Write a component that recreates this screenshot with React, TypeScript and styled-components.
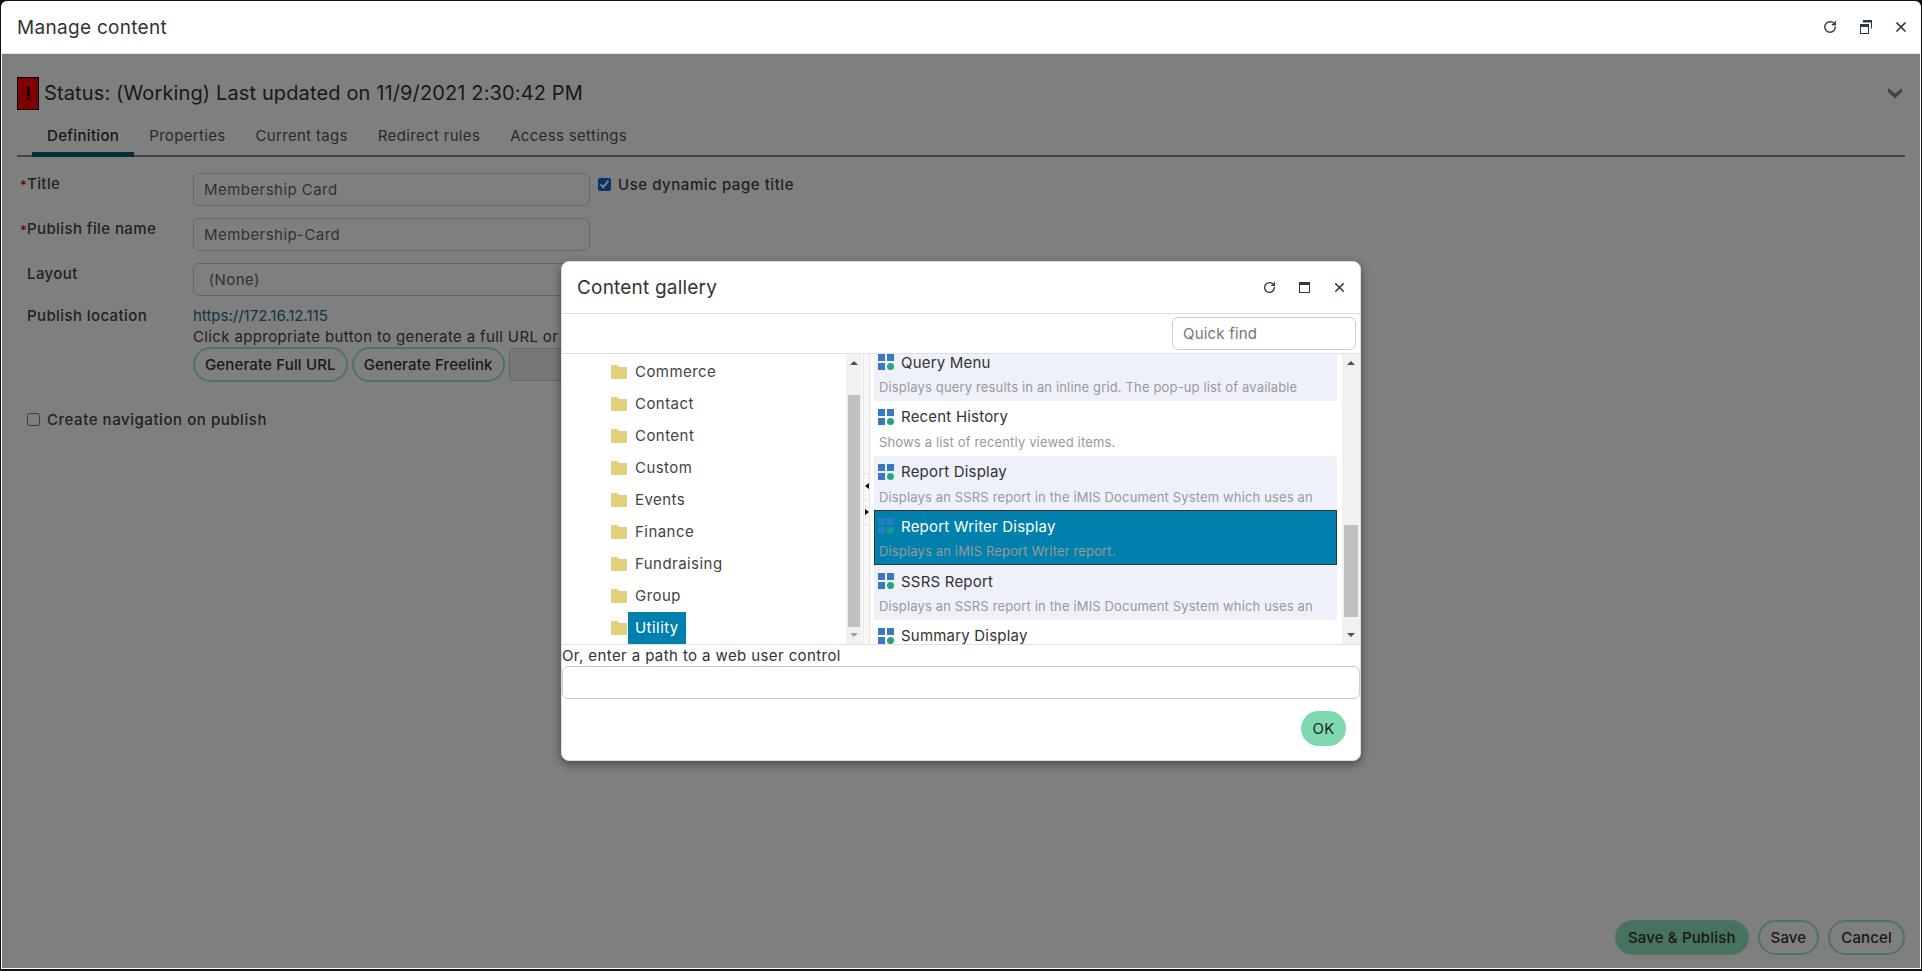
import React from 'react';
import styled, { createGlobalStyle } from 'styled-components';
import { RotateCw, X } from 'lucide-react';

const GlobalStyle = createGlobalStyle`
  html, body {
    margin: 0;
    padding: 0;
    background: #000;
  }
  * {
    box-sizing: border-box;
  }
  body, input, button {
    font-family: Inter, 'Open Sans', sans-serif;
    color: #333;
  }
`;

const Frame = styled.div`
  width: 1922px;
  height: 971px;
  padding: 1px 1px 2px 1px;
  background: #111;
`;

const Window = styled.div`
  height: 100%;
  display: flex;
  flex-direction: column;
  background: #fff;
  border-radius: 6px 6px 0 0;
  border: 1px solid #fff;
  border-top: 0;
  overflow: hidden;
`;

const TitleBar = styled.div`
  flex: none;
  height: 53px;
  display: flex;
  align-items: center;
  justify-content: space-between;
  padding: 0 11px 0 15px;
  border-bottom: 1px solid #e0e0e0;
`;

const TitleText = styled.div`
  font-size: 19px;
  letter-spacing: 0.3px;
  color: #333;
`;

const TitleIcons = styled.div`
  display: flex;
  align-items: center;
  gap: 19.5px;
  color: #2c3a44;
`;

const IconButton = styled.span`
  width: 16px;
  height: 16px;
  display: flex;
  align-items: center;
  justify-content: center;
`;

const Body = styled.div`
  position: relative;
  flex: 1;
  min-height: 0;
  display: flex;
  flex-direction: column;
  padding: 0 15px 13px 15px;
  background: #fff;
`;

const StatusRow = styled.div`
  display: flex;
  align-items: center;
  height: 40px;
  margin-top: 19px;
  padding-right: 3px;
`;

const StatusIcon = styled.div`
  width: 22px;
  height: 33px;
  display: flex;
  align-items: center;
  justify-content: center;
  background: #f00;
  border: 1px solid #000;
  font-size: 18px;
  font-weight: 700;
  color: #111;
`;

const StatusText = styled.div`
  margin-left: 5px;
  flex: 1;
  font-size: 20px;
  letter-spacing: 0.13px;
`;

const Tabs = styled.div`
  display: flex;
  height: 40px;
  margin-top: 4px;
  padding-left: 15px;
  border-bottom: 2px solid #888;
`;

const Tab = styled.div<{ $active?: boolean }>`
  padding: 2px 15px 0;
  margin-bottom: -2px;
  display: flex;
  align-items: center;
  font-size: 15px;
  letter-spacing: 0.33px;
  font-weight: ${({ $active }) => ($active ? 500 : 400)};
  color: ${({ $active }) => ($active ? '#333' : '#555')};
  border-bottom: 5px solid ${({ $active }) => ($active ? '#0d5a70' : 'transparent')};
`;

const FormGrid = styled.div`
  display: grid;
  grid-template-columns: 176px 397px auto;
  grid-auto-rows: min-content;
  justify-content: start;
  margin-top: 16px;
`;

const Label = styled.label<{ $required?: boolean }>`
  position: relative;
  padding-left: 10px;
  font-size: 15px;
  font-weight: 500;
  line-height: 22px;
  letter-spacing: 0.4px;
  color: #444;
  ${({ $required }) =>
    $required ? "&::before { content: '*'; position: absolute; left: 3px; top: 1px; font-size: 13px; color: #d00; }" : ''}
`;

const TextInput = styled.input`
  width: 100%;
  height: 33px;
  padding: 0 10px;
  border: 1px solid #ccc;
  border-radius: 6px;
  background: #fff;
  font-size: 15px;
  letter-spacing: 0.45px;
  color: #666;
  outline: none;
`;

const FieldRow = styled.div`
  display: contents;
`;

const Spaced = styled.div<{ $bottom: number }>`
  margin-bottom: ${({ $bottom }) => $bottom}px;
`;

const InlineCheck = styled.label<{ $left?: number; $top?: number }>`
  display: flex;
  align-items: center;
  gap: 7px;
  margin-left: ${({ $left }) => $left ?? 0}px;
  margin-top: ${({ $top }) => $top ?? 0}px;
  height: 22px;
  font-size: 15px;
  font-weight: 500;
  letter-spacing: 0.55px;
  color: #444;
  input {
    width: 13px;
    height: 13px;
    margin: 0;
    accent-color: #0a66d8;
  }
`;

const LinkText = styled.a`
  display: block;
  font-size: 15px;
  line-height: 22px;
  color: #1a6a88;
`;

const HelpText = styled.div`
  font-size: 15px;
  line-height: 20px;
  letter-spacing: 0.37px;
  white-space: nowrap;
  color: #444;
`;

const ButtonRow = styled.div`
  display: flex;
  gap: 4px;
`;

const PillButton = styled.button<{ $primary?: boolean; $pad?: number }>`
  height: 35px;
  padding: 0 ${({ $pad }) => $pad ?? 10}px;
  border-radius: 18px;
  border: 2px solid #94ecc2;
  background: ${({ $primary }) => ($primary ? '#8ee4bb' : '#fff')};
  font-size: 15px;
  font-weight: 500;
  letter-spacing: 0.15px;
  white-space: nowrap;
  color: #333;
`;

const BlankBox = styled.div`
  width: 70px;
  height: 33px;
  margin-top: 1px;
  background: #eee;
  border: 1px solid #ccc;
  border-radius: 4px;
`;

const Footer = styled.div`
  margin-top: auto;
  display: flex;
  justify-content: flex-end;
  gap: 9px;
`;

const Overlay = styled.div`
  position: absolute;
  inset: 0;
  background: rgba(0, 0, 0, 0.5);
  display: flex;
  align-items: center;
  justify-content: center;
`;

const Modal = styled.div`
  width: 800px;
  height: 500px;
  display: flex;
  flex-direction: column;
  background: #fff;
  border: 1px solid #ddd;
  border-radius: 8px;
  box-shadow: 0 3px 10px rgba(0, 0, 0, 0.45);
  overflow: hidden;
`;

const ModalHead = styled.div`
  flex: none;
  height: 52px;
  display: flex;
  align-items: center;
  justify-content: space-between;
  padding: 0 12.5px 0 15px;
  border-bottom: 1px solid #e0e0e0;
`;

const ModalTitle = styled.div`
  font-size: 19px;
  letter-spacing: 0.2px;
  color: #333;
`;

const ModalIcons = styled.div`
  display: flex;
  align-items: center;
  gap: 19px;
  color: #2c3a44;
`;

const Toolbar = styled.div`
  flex: none;
  height: 40px;
  display: flex;
  align-items: center;
  justify-content: flex-end;
  padding-right: 4px;
  border-bottom: 1px solid #e0e0e0;
`;

const QuickFind = styled.input`
  width: 184px;
  height: 33px;
  padding: 0 10px;
  border: 1px solid #ccc;
  border-radius: 6px;
  font-size: 15px;
  letter-spacing: 0.2px;
  outline: none;
  &::placeholder {
    color: #777;
    opacity: 1;
  }
`;

const Panes = styled.div`
  flex: none;
  height: 291px;
  display: flex;
  border-bottom: 1px solid #e0e0e0;
`;

const TreePane = styled.div`
  width: 284px;
  padding: 2px 0 0 49px;
  overflow: hidden;
`;

const TreeRow = styled.div`
  display: flex;
  align-items: center;
  height: 32px;
`;

const TreeLabel = styled.span<{ $selected?: boolean }>`
  height: 32px;
  padding: 0 7px 2px;
  margin-left: 1px;
  display: flex;
  align-items: center;
  font-size: 15px;
  letter-spacing: 0.45px;
  color: ${({ $selected }) => ($selected ? '#fff' : '#444')};
  background: ${({ $selected }) => ($selected ? '#0080ac' : 'transparent')};
`;

const Scrollbar = styled.div<{ $width: number }>`
  flex: none;
  width: ${({ $width }) => $width}px;
  display: flex;
  flex-direction: column;
  align-items: center;
  background: #f1f1f1;
  position: relative;
`;

const ScrollThumb = styled.div<{ $top: number; $height: number }>`
  position: absolute;
  top: ${({ $top }) => $top}px;
  left: 2px;
  right: 2px;
  height: ${({ $height }) => $height}px;
  background: #c1c1c1;
`;

const ArrowUp = styled.span`
  margin-top: 7px;
  border-left: 4px solid transparent;
  border-right: 4px solid transparent;
  border-bottom: 4px solid #505050;
`;

const ArrowDown = styled.span<{ $dark?: boolean }>`
  margin-top: auto;
  margin-bottom: 7px;
  border-left: 4px solid transparent;
  border-right: 4px solid transparent;
  border-top: 4px solid ${({ $dark }) => ($dark ? '#505050' : '#a3a3a3')};
`;

const Splitter = styled.div`
  flex: none;
  width: 7px;
  margin-left: 1px;
  background: #f8f8f8;
  border-left: 1px solid #e4e4e4;
  border-right: 1px solid #e4e4e4;
  display: flex;
  flex-direction: column;
  align-items: center;
  justify-content: center;
  padding-bottom: 1px;
`;

const SplitHandle = styled.div<{ $right?: boolean }>`
  height: 26px;
  width: 100%;
  display: flex;
  align-items: center;
  justify-content: center;
  border-top: 1px solid #e4e4e4;
  &:last-child {
    border-bottom: 1px solid #e4e4e4;
  }
  &::after {
    content: '';
    border-top: 3.5px solid transparent;
    border-bottom: 3.5px solid transparent;
    ${({ $right }) => ($right ? 'border-left: 4px solid #000;' : 'border-right: 4px solid #000;')}
  }
`;

const ListPane = styled.div`
  width: 463px;
  margin-left: 4px;
  overflow: hidden;
`;

const ListScroll = styled.div`
  margin-top: -8px;
`;

const ListItem = styled.div<{ $tint?: boolean; $selected?: boolean }>`
  height: 54.8px;
  padding: 5px 0 0 4px;
  background: ${({ $tint, $selected }) => ($selected ? '#0080ac' : $tint ? '#eef1fa' : '#fff')};
  ${({ $selected }) => ($selected ? 'outline: 1px solid #333; outline-offset: -1px;' : '')}
`;

const ItemTitle = styled.div<{ $selected?: boolean }>`
  display: flex;
  align-items: center;
  gap: 7px;
  height: 22px;
  font-size: 15px;
  letter-spacing: 0.2px;
  color: ${({ $selected }) => ($selected ? '#fff' : '#333')};
`;

const ItemDesc = styled.div`
  margin-top: 5px;
  padding-left: 1px;
  font-size: 13px;
  line-height: 18px;
  letter-spacing: 0.15px;
  white-space: nowrap;
  color: #999;
`;

const ListGap = styled.div`
  width: 5px;
  flex: none;
`;

const PathLabel = styled.div`
  margin-top: 1px;
  font-size: 15px;
  line-height: 20px;
  letter-spacing: 0.4px;
  color: #333;
`;

const PathInput = styled.input`
  display: block;
  width: 798px;
  height: 33px;
  border: 1px solid #ccc;
  border-radius: 6px;
  outline: none;
`;

const ModalFooter = styled.div`
  display: flex;
  justify-content: flex-end;
  padding: 12px 14px 0 0;
`;

const OkButton = styled.button`
  width: 45px;
  height: 35px;
  padding: 0;
  border: 0;
  border-radius: 18px;
  background: #80d8b0;
  font-size: 15px;
  letter-spacing: 0.3px;
  color: #222;
`;

const Chevron = () => (
  <svg width="14" height="12" viewBox="0 0 14 12" fill="none">
    <path d="M0 1 7 6.5 14 1v4l-7 6.5L0 5z" fill="#888" />
  </svg>
);

const RestoreIcon = () => (
  <svg width="12" height="14" viewBox="0 0 12 14" fill="none">
    <path d="M3 .5h8.5v8" stroke="currentColor" />
    <rect x="3" y="0" width="9" height="2.5" fill="currentColor" />
    <rect x=".5" y="4.5" width="8" height="9" stroke="currentColor" />
    <rect x="0" y="4" width="9" height="3" fill="currentColor" />
  </svg>
);

const MaximizeIcon = () => (
  <svg width="11" height="11" viewBox="0 0 11 11" fill="none">
    <rect x=".5" y=".5" width="10" height="10" stroke="currentColor" />
    <rect x="0" y="0" width="11" height="3" fill="currentColor" />
  </svg>
);

const FolderIcon = () => (
  <svg width="16" height="14" viewBox="0 0 16 14">
    <path d="M0 0h6l2 2h8v12H0z" fill="#e2d07a" />
  </svg>
);

const TileIcon = ({ faded }: { faded?: boolean }) => (
  <svg width="16" height="16" viewBox="0 0 16 16" style={{ flex: 'none', opacity: faded ? 0.75 : 1 }}>
    <rect x="0" y="0" width="7" height="7" fill="#3b78c4" />
    <rect x="9" y="0" width="7" height="7" fill="#3b78c4" />
    <rect x="0" y="9" width="7" height="7" fill="#3b78c4" />
    <circle cx="12.5" cy="12.5" r="3.5" fill="#1fa97c" />
  </svg>
);

const FOLDERS = ['Commerce', 'Contact', 'Content', 'Custom', 'Events', 'Finance', 'Fundraising', 'Group', 'Utility'];

const ITEMS = [
  { title: 'Query Menu', desc: 'Displays query results in an inline grid. The pop-up list of available', tint: true },
  { title: 'Recent History', desc: 'Shows a list of recently viewed items.' },
  { title: 'Report Display', desc: 'Displays an SSRS report in the iMIS Document System which uses an', tint: true },
  { title: 'Report Writer Display', desc: 'Displays an iMIS Report Writer report.', selected: true },
  { title: 'SSRS Report', desc: 'Displays an SSRS report in the iMIS Document System which uses an', tint: true },
  { title: 'Summary Display', desc: '' },
];

const App = () => {
  return (
    <>
      <GlobalStyle />
      <Frame>
        <Window>
          <TitleBar>
            <TitleText>Manage content</TitleText>
            <TitleIcons>
              <IconButton><RotateCw size={14} strokeWidth={2.4} /></IconButton>
              <IconButton><RestoreIcon /></IconButton>
              <IconButton><X size={16} strokeWidth={2.6} /></IconButton>
            </TitleIcons>
          </TitleBar>
          <Body>
            <StatusRow>
              <StatusIcon>!</StatusIcon>
              <StatusText>Status: (Working) Last updated on 11/9/2021 2:30:42 PM</StatusText>
              <Chevron />
            </StatusRow>
            <Tabs>
              <Tab $active>Definition</Tab>
              <Tab>Properties</Tab>
              <Tab>Current tags</Tab>
              <Tab>Redirect rules</Tab>
              <Tab>Access settings</Tab>
            </Tabs>
            <FormGrid>
              <FieldRow>
                <Label $required>Title</Label>
                <Spaced $bottom={12}><TextInput readOnly value="Membership Card" /></Spaced>
                <InlineCheck $left={8}><input type="checkbox" defaultChecked />Use dynamic page title</InlineCheck>
              </FieldRow>
              <FieldRow>
                <Label $required>Publish file name</Label>
                <Spaced $bottom={12}><TextInput readOnly value="Membership-Card" /></Spaced>
                <div />
              </FieldRow>
              <FieldRow>
                <Label>Layout</Label>
                <Spaced $bottom={9}><TextInput readOnly value=" (None)" /></Spaced>
                <div />
              </FieldRow>
              <FieldRow>
                <Label>Publish location</Label>
                <Spaced $bottom={0}>
                  <LinkText>https://172.16.12.115</LinkText>
                  <HelpText>Click appropriate button to generate a full URL or</HelpText>
                  <ButtonRow>
                    <PillButton>Generate Full URL</PillButton>
                    <PillButton>Generate Freelink</PillButton>
                    <BlankBox />
                  </ButtonRow>
                </Spaced>
                <div />
              </FieldRow>
            </FormGrid>
            <InlineCheck $left={10} $top={26}>
              <input type="checkbox" />Create navigation on publish
            </InlineCheck>
            <Footer>
              <PillButton $primary $pad={11}>Save &amp; Publish</PillButton>
              <PillButton $pad={11}>Save</PillButton>
              <PillButton $pad={11}>Cancel</PillButton>
            </Footer>
            <Overlay>
              <Modal>
                <ModalHead>
                  <ModalTitle>Content gallery</ModalTitle>
                  <ModalIcons>
                    <IconButton><RotateCw size={13} strokeWidth={2.4} /></IconButton>
                    <IconButton><MaximizeIcon /></IconButton>
                    <IconButton><X size={15} strokeWidth={2.6} /></IconButton>
                  </ModalIcons>
                </ModalHead>
                <Toolbar>
                  <QuickFind placeholder="Quick find" />
                </Toolbar>
                <Panes>
                  <TreePane>
                    {FOLDERS.map((name) => (
                      <TreeRow key={name}>
                        <FolderIcon />
                        <TreeLabel $selected={name === 'Utility'}>{name}</TreeLabel>
                      </TreeRow>
                    ))}
                  </TreePane>
                  <Scrollbar $width={16}>
                    <ArrowUp />
                    <ScrollThumb $top={41} $height={232} />
                    <ArrowDown />
                  </Scrollbar>
                  <Splitter>
                    <SplitHandle />
                    <SplitHandle $right />
                  </Splitter>
                  <ListPane>
                    <ListScroll>
                      {ITEMS.map((item) => (
                        <ListItem key={item.title} $tint={item.tint} $selected={item.selected}>
                          <ItemTitle $selected={item.selected}>
                            <TileIcon faded={item.selected} />
                            {item.title}
                          </ItemTitle>
                          <ItemDesc>{item.desc}</ItemDesc>
                        </ListItem>
                      ))}
                    </ListScroll>
                  </ListPane>
                  <ListGap />
                  <Scrollbar $width={18}>
                    <ArrowUp />
                    <ScrollThumb $top={171} $height={92} />
                    <ArrowDown $dark />
                  </Scrollbar>
                </Panes>
                <PathLabel>Or, enter a path to a web user control</PathLabel>
                <PathInput />
                <ModalFooter>
                  <OkButton>OK</OkButton>
                </ModalFooter>
              </Modal>
            </Overlay>
          </Body>
        </Window>
      </Frame>
    </>
  );
};

export default App;
